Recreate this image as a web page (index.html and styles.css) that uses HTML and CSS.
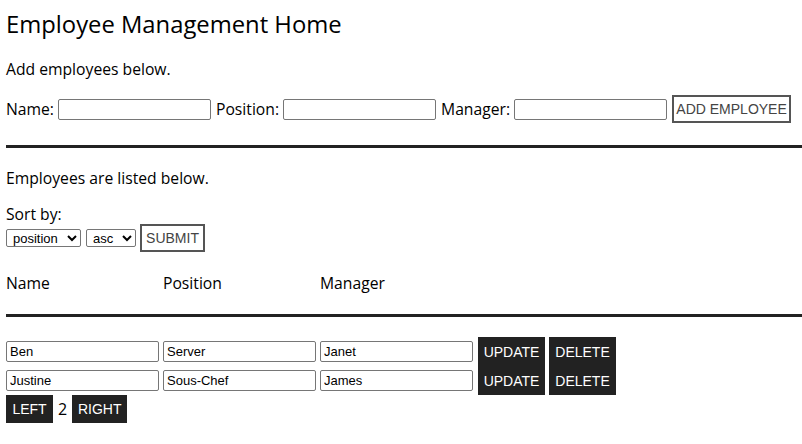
FILE: index.html
```html
<!DOCTYPE html>
<html>
<head>
<meta charset="utf-8">
<link rel="stylesheet" href="styles.css">
</head>
<body>
<div class="page">
  <h1 class="title">Employee Management Home</h1>
  <p class="intro">Add employees below.</p>
  <div class="add-row">
    <label class="field">Name: <input class="txt" type="text"></label>
    <label class="field">Position: <input class="txt" type="text"></label>
    <label class="field">Manager: <input class="txt" type="text"></label>
    <button class="outline-btn add-btn">ADD EMPLOYEE</button>
  </div>
  <hr class="rule rule-top">
  <p class="listed">Employees are listed below.</p>
  <p class="sort-label">Sort by:</p>
  <div class="sort-row">
    <select class="sel sel-field"><option>position</option></select>
    <select class="sel sel-dir"><option>asc</option></select>
    <button class="outline-btn submit-btn">SUBMIT</button>
  </div>
  <div class="head-row">
    <span>Name</span><span>Position</span><span>Manager</span>
  </div>
  <hr class="rule rule-mid">
  <div class="list">
    <div class="emp-row">
      <input class="cell" type="text" value="Ben">
      <input class="cell" type="text" value="Server">
      <input class="cell" type="text" value="Janet">
      <button class="dark-btn upd">UPDATE</button>
      <button class="dark-btn del">DELETE</button>
    </div>
    <div class="emp-row">
      <input class="cell" type="text" value="Justine">
      <input class="cell" type="text" value="Sous-Chef">
      <input class="cell" type="text" value="James">
      <button class="dark-btn upd">UPDATE</button>
      <button class="dark-btn del">DELETE</button>
    </div>
  </div>
  <div class="pager">
    <button class="dark-btn left-btn">LEFT</button>
    <span class="page-num">2</span>
    <button class="dark-btn right-btn">RIGHT</button>
  </div>
</div>
</body>
</html>
```
FILE: styles.css
```css
html, body {
  margin: 0;
  padding: 0;
  background: #fff;
}
body {
  font-family: "Open Sans", Lato, sans-serif;
  color: #000;
  font-size: 15.7px;
}
.page {
  padding-left: 6px;
}
.title {
  margin: 10px 0 0;
  font-size: 23.8px;
  line-height: 28px;
  font-weight: 400;
}
.intro {
  margin: 21px 0 0;
  line-height: 20px;
}
.add-row {
  margin-top: 16px;
  display: flex;
  align-items: center;
  height: 28px;
}
.field {
  display: flex;
  align-items: center;
  gap: 4px;
  margin-right: 5px;
}
.txt, .cell {
  box-sizing: border-box;
  width: 153px;
  height: 21px;
  border: 1px solid #767676;
  border-radius: 2px;
  padding: 1px 3px;
  font-family: Arial, "Liberation Sans", sans-serif;
  font-size: 13px;
  color: #000;
  background: #fff;
  margin: 0;
}
.outline-btn {
  box-sizing: border-box;
  border: 2px solid #555;
  background: #fff;
  color: #444;
  font-family: Arial, "Liberation Sans", sans-serif;
  font-size: 14px;
  line-height: 16px;
  margin: 0;
  padding: 0;
  border-radius: 0;
  white-space: nowrap;
  text-align: center;
}
.add-btn {
  height: 28px;
  width: 119px;
}
.rule {
  border: 0;
  border-top: 3px solid #222;
  margin: 0;
  height: 0;
}
.rule-top { margin-top: 22px; }
.listed {
  margin: 20px 0 0;
  line-height: 20px;
}
.sort-label {
  margin: 16px 0 0;
  line-height: 20px;
}
.sort-row {
  display: flex;
  align-items: center;
  gap: 4px;
  height: 28px;
}
.sel {
  box-sizing: border-box;
  height: 18px;
  font-family: Arial, "Liberation Sans", sans-serif;
  font-size: 13px;
  border: 1px solid #767676;
  border-radius: 2px;
  background: #fff;
  color: #000;
  margin: 0;
  padding: 0 0 0 2px;
}
.sel-field { width: 75px; }
.sel-dir { width: 50px; margin-left: 1px; }
.submit-btn {
  height: 28px;
  width: 65px;
}
.head-row {
  margin-top: 21px;
  display: grid;
  grid-template-columns: 157px 157px 157px;
  line-height: 20px;
}
.rule-mid { margin-top: 21px; }
.list {
  margin-top: 20px;
  display: flex;
  flex-direction: column;
}
.emp-row {
  display: flex;
  align-items: center;
  gap: 4px;
}
.dark-btn {
  box-sizing: border-box;
  background: #222;
  color: #fff;
  border: 0;
  border-radius: 0;
  font-family: Arial, "Liberation Sans", sans-serif;
  font-size: 14px;
  line-height: 16px;
  height: 29px;
  padding: 0;
  margin: 0;
  white-space: nowrap;
  text-align: center;
}
.upd { margin-left: 1px; width: 67px; }
.del { width: 67px; }
.pager {
  display: flex;
  align-items: center;
  gap: 5px;
}
.pager .dark-btn { height: 28px; }
.left-btn { width: 47px; }
.right-btn { width: 55px; }
.page-num {
  font-size: 16px;
  color: #000;
}
```
